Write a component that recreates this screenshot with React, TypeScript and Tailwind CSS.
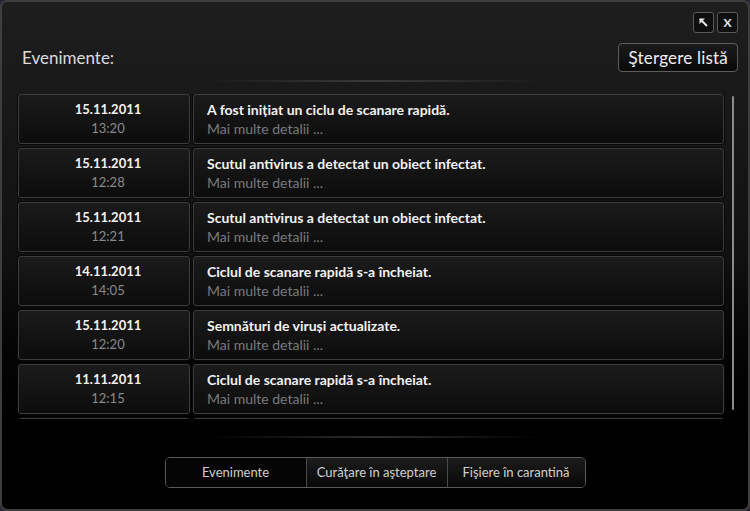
import React from "react";

const rows = [
  { d: "15.11.2011", t: "13:20", m: "A fost inițiat un ciclu de scanare rapidă." },
  { d: "15.11.2011", t: "12:28", m: "Scutul antivirus a detectat un obiect infectat." },
  { d: "15.11.2011", t: "12:21", m: "Scutul antivirus a detectat un obiect infectat." },
  { d: "14.11.2011", t: "14:05", m: "Ciclul de scanare rapidă s-a încheiat." },
  { d: "15.11.2011", t: "12:20", m: "Semnături de viruși actualizate." },
  { d: "11.11.2011", t: "12:15", m: "Ciclul de scanare rapidă s-a încheiat." },
];

const cell =
  "rounded-[3px] border border-[#3c3c3c] bg-gradient-to-b from-[#1b1b1b] to-[#0c0c0c] shadow-[0_0_0_1px_#080808]";

export default function App() {
  return (
    <div
      className="w-[750px] h-[511px] bg-[#2a2530] overflow-hidden"
      style={{ fontFamily: "Lato, 'Open Sans', sans-serif" }}
    >
      <div className="w-full h-full rounded-[7px] border-2 border-[#3e3e3e] bg-gradient-to-b from-[#1e1e1e] via-[#111111] to-[#000000] flex flex-col">
        {/* top icons */}
        <div className="flex justify-end gap-[3px] pt-[10px] pr-[10px]">
          <div className="w-[21px] h-[21px] rounded-[3px] border border-[#5a5a5a] bg-[#0e0e0e] flex items-center justify-center">
            <svg width="11" height="11" viewBox="0 0 11 11">
              <path d="M2 2 L9 9" stroke="#e6e6e6" strokeWidth="2" />
              <path d="M1.5 1.5 H7 L1.5 7 Z" fill="#e6e6e6" />
            </svg>
          </div>
          <div className="w-[21px] h-[21px] rounded-[3px] border border-[#5a5a5a] bg-[#0e0e0e] flex items-center justify-center">
            <span className="text-[12px] font-bold text-[#e6e6e6] leading-none">X</span>
          </div>
        </div>
        {/* header */}
        <div className="flex items-center justify-between pl-[20px] pr-[10px] mt-[10px]">
          <span className="text-[17px] text-[#dcdcdc]">Evenimente:</span>
          <div className="h-[29px] px-[9px] rounded-[4px] border border-[#5c5c5c] bg-gradient-to-b from-[#1a1a1a] to-[#0a0a0a] flex items-center text-[17px] text-[#f0f0f0] tracking-[0.2px]">
            Ştergere listă
          </div>
        </div>
        <div className="mx-auto mt-[8px] w-[340px] h-[2px] bg-gradient-to-r from-transparent via-[#3a3a3a] to-transparent" />
        {/* list */}
        <div className="flex mt-[12px] h-[325px] overflow-hidden">
          <div className="flex flex-col gap-[4px] pl-[16px] w-[722px]">
            {rows.map((r, i) => (
              <div key={i} className="flex gap-[3px] h-[50px] shrink-0">
                <div className={`${cell} w-[172px] flex flex-col items-center justify-center pl-[8px]`}>
                  <span className="text-[13px] font-bold text-[#f2f2f2] leading-[19px]">{r.d}</span>
                  <span className="text-[13px] text-[#8a8a8a] leading-[19px]">{r.t}</span>
                </div>
                <div className={`${cell} flex-1 flex flex-col justify-center pl-[13px]`}>
                  <span className="text-[14px] font-bold text-[#f2f2f2] leading-[19px]">{r.m}</span>
                  <span className="text-[14px] text-[#7a7a7a] leading-[19px]">Mai multe detalii ...</span>
                </div>
              </div>
            ))}
            <div className="flex gap-[3px] h-[50px] shrink-0">
              <div className={`${cell} w-[172px]`} />
              <div className={`${cell} flex-1`} />
            </div>
          </div>
          <div className="ml-[8px] mt-[2px] w-[2px] h-[314px] bg-[#8a8a8a] rounded-full" />
        </div>
        <div className="mx-auto mt-[17px] w-[330px] h-[2px] bg-gradient-to-r from-transparent via-[#2e2e2e] to-transparent" />
        {/* tabs */}
        <div className="flex justify-center mt-[19px]">
          <div className="flex h-[31px] rounded-[5px] border border-[#5a5a5a] overflow-hidden text-[13px] text-[#d0d0d0]">
            <div className="w-[140px] flex items-center justify-center bg-[#050505]">Evenimente</div>
            <div className="w-[141px] flex items-center justify-center border-l border-[#4a4a4a] bg-gradient-to-b from-[#1c1c1c] to-[#080808]">Curăţare în aşteptare</div>
            <div className="w-[138px] flex items-center justify-center border-l border-[#4a4a4a] bg-gradient-to-b from-[#1c1c1c] to-[#080808]">Fişiere în carantină</div>
          </div>
        </div>
      </div>
    </div>
  );
}
